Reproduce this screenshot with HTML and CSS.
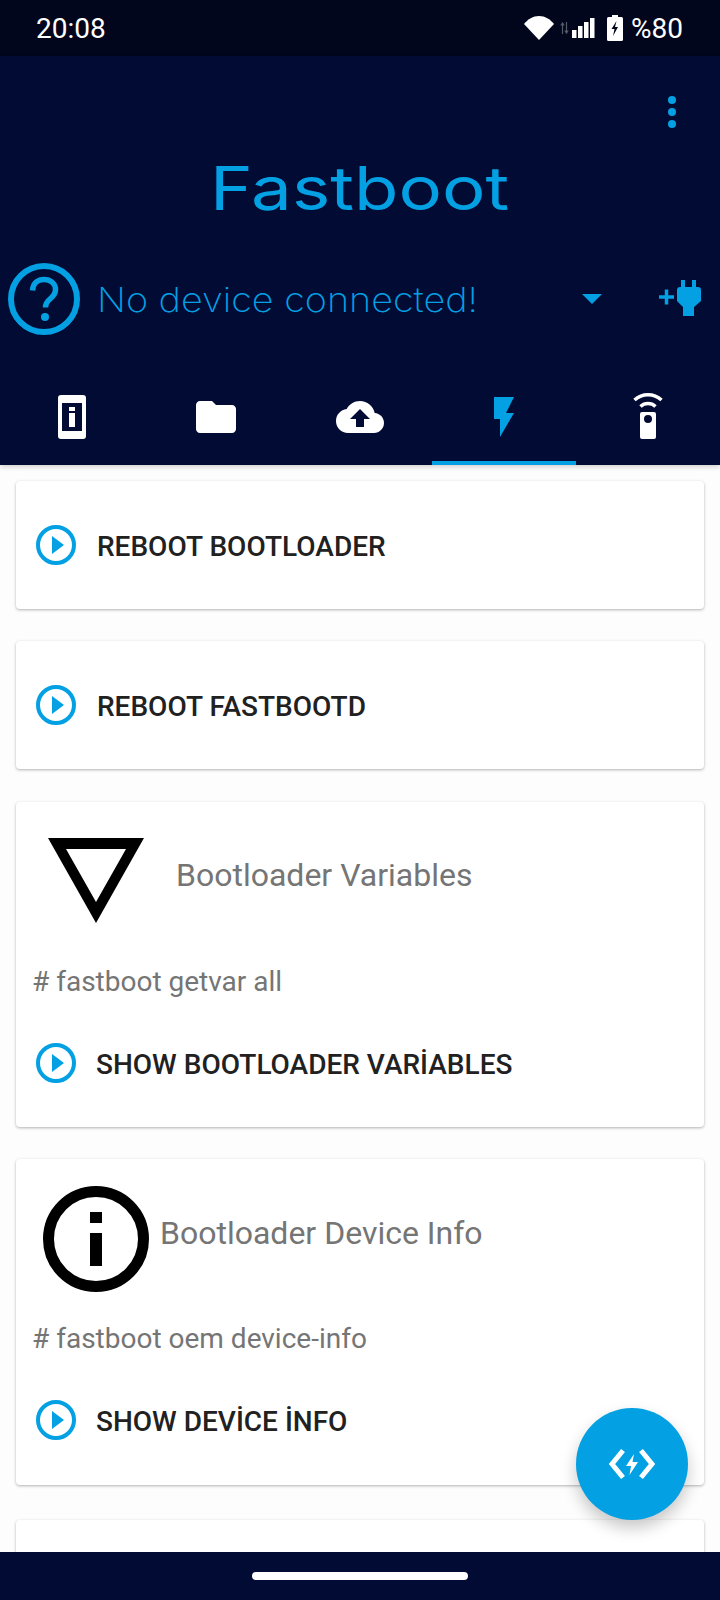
FILE: index.html
```html
<!DOCTYPE html>
<html lang="tr">
<head>
<meta charset="utf-8">
<title>Fastboot</title>
<link rel="stylesheet" href="styles.css">
</head>
<body>
<div class="screen">
  <div class="statusbar">
    <span class="clock">20:08</span>
    <div class="status-icons">
      <svg class="ic-wifi" width="30" height="24" viewBox="0 0 30 24"><path d="M0 8C4 3 9 0 15 0s11 3 15 8L15 24z" fill="#fff"/></svg>
      <svg class="ic-data" width="9" height="12" viewBox="0 0 9 12"><path d="M2.500 12V2M0.800 3.500 2.500 1l1.700 2.500M6.500 0v10M4.800 8.500 6.500 11l1.700-2.500" stroke="#555a68" stroke-width="1.200" fill="none"/></svg>
      <svg class="ic-signal" width="23" height="20" viewBox="0 0 23 20"><path d="M0 12h4.500v8H0zM6 8h4.500v12H6zM12 4h4.500v16H12zM18 0h4.500v20H18z" fill="#fff"/></svg>
      <svg class="ic-batt" width="16" height="26" viewBox="0 0 16 26"><path d="M5 0h6v2h3.500Q16 2 16 3.500V24.500Q16 26 14.500 26H1.500Q0 26 0 24.500V3.500Q0 2 1.500 2H5z" fill="#fff"/><path d="M9.500 6 4.500 14h3l-1.500 7 5-9H8z" fill="#02061c"/></svg>
      <span class="batt-text">%80</span>
    </div>
  </div>

  <header class="appbar">
    <div class="menu-row">
      <div class="dots"><i></i><i></i><i></i></div>
    </div>
    <h1 class="app-title"><span class="app-title-text">Fastboot</span></h1>
    <div class="device-row">
      <svg width="72" height="72" viewBox="0 0 72 72"><circle cx="36" cy="36" r="33" fill="none" stroke="#03a0e3" stroke-width="6"/><path d="M24.500 27.500C25 20 30 16.500 36 16.500c6.500 0 11.500 4 11.500 10 0 4.500-2.500 7-5.500 9.500-3 2.400-4.500 4-4.500 8.500" fill="none" stroke="#03a0e3" stroke-width="5.500"/><circle cx="37" cy="54" r="4" fill="#03a0e3"/></svg>
      <span class="device-name"><span class="device-name-text">No device connected!</span></span>
      <svg class="ic-caret" width="20" height="10" viewBox="0 0 20 10"><path d="M0 0h20L10 10z" fill="#03a0e3"/></svg>
      <svg class="ic-plug" width="44" height="38" viewBox="0 0 44 38"><path d="M0 18h15M7.500 10.500v15" stroke="#03a0e3" stroke-width="3.500"/><path d="M22 1h4v7h7V1h4v7h2q3 0 3 3v11l-7 6v9H24v-9l-6-6V11q0-3 3-3h1z" fill="#03a0e3"/></svg>
    </div>
    <nav class="tabs">
      <div class="tab">
        <svg width="48" height="48" viewBox="0 0 48 48"><path fill-rule="evenodd" d="M13 2h22q3 0 3 3v38q0 3-3 3H13q-3 0-3-3V5q0-3 3-3zM14 10v28h20V10zM21 14h6v4h-6zM21 20h6v14h-6z" fill="#fff"/></svg>
      </div>
      <div class="tab">
        <svg width="48" height="48" viewBox="0 0 24 24"><path d="M10 4H4c-1.100 0-1.990.9-1.990 2L2 18c0 1.100.9 2 2 2h16c1.100 0 2-.9 2-2V8c0-1.100-.9-2-2-2h-8l-2-2z" fill="#fff"/></svg>
      </div>
      <div class="tab">
        <svg width="48" height="48" viewBox="0 0 24 24"><path d="M19.350 10.040C18.670 6.590 15.640 4 12 4 9.110 4 6.600 5.640 5.350 8.040 2.340 8.360 0 10.910 0 14c0 3.310 2.690 6 6 6h13c2.760 0 5-2.240 5-5 0-2.640-2.050-4.780-4.650-4.960zM14 13v4h-4v-4H7l5-5 5 5h-3z" fill="#fff"/></svg>
      </div>
      <div class="tab tab-active">
        <svg width="48" height="48" viewBox="0 0 24 24"><path d="M7 2v11h3v9l7-12h-4l4-8z" fill="#03a0e3"/></svg>
      </div>
      <div class="tab">
        <svg width="48" height="48" viewBox="0 0 48 48"><path fill-rule="evenodd" d="M18 19h12q2 0 2 2v23q0 2-2 2H18q-2 0-2-2V21q0-2 2-2zM24 22a4 4 0 1 0 0 8 4 4 0 0 0 0-8z" fill="#fff"/><path d="M10.500 7A20 20 0 0 1 37.500 7M16.500 13.500A11 11 0 0 1 31.500 13.500" fill="none" stroke="#fff" stroke-width="3.500"/></svg>
      </div>
    </nav>
  </header>

  <main class="content">
    <section class="card card-simple">
      <div class="action">
        <svg class="play" width="40" height="40" viewBox="0 0 40 40"><circle cx="20" cy="20" r="18" fill="none" stroke="#03a0e3" stroke-width="4"/><path d="M16 11v18l12-9z" fill="#03a0e3"/></svg>
        <span class="action-label">REBOOT BOOTLOADER</span>
      </div>
    </section>
    <section class="card card-simple">
      <div class="action">
        <svg class="play" width="40" height="40" viewBox="0 0 40 40"><circle cx="20" cy="20" r="18" fill="none" stroke="#03a0e3" stroke-width="4"/><path d="M16 11v18l12-9z" fill="#03a0e3"/></svg>
        <span class="action-label">REBOOT FASTBOOTD</span>
      </div>
    </section>
    <section class="card card-full card-vars">
      <div class="card-head">
        <svg width="112" height="112" viewBox="0 0 112 112"><path fill-rule="evenodd" d="M8 12H104L56 97zM26 23 56 76 86 23z" fill="#000"/></svg>
        <span class="card-title title-wide">Bootloader Variables</span>
      </div>
      <p class="command">#&nbsp;fastboot getvar all</p>
      <div class="action action-tight">
        <svg class="play" width="40" height="40" viewBox="0 0 40 40"><circle cx="20" cy="20" r="18" fill="none" stroke="#03a0e3" stroke-width="4"/><path d="M16 11v18l12-9z" fill="#03a0e3"/></svg>
        <span class="action-label">SHOW BOOTLOADER VARİABLES</span>
      </div>
    </section>
    <section class="card card-full">
      <div class="card-head">
        <svg width="112" height="112" viewBox="0 0 112 112"><circle cx="56" cy="56" r="47.500" fill="none" stroke="#000" stroke-width="11"/><path d="M50 29h12v11H50zM50 50h12v33H50z" fill="#000"/></svg>
        <span class="card-title">Bootloader Device Info</span>
      </div>
      <p class="command">#&nbsp;fastboot oem device-info</p>
      <div class="action action-tight">
        <svg class="play" width="40" height="40" viewBox="0 0 40 40"><circle cx="20" cy="20" r="18" fill="none" stroke="#03a0e3" stroke-width="4"/><path d="M16 11v18l12-9z" fill="#03a0e3"/></svg>
        <span class="action-label">SHOW DEVİCE İNFO</span>
      </div>
    </section>
    <section class="card card-full card-last"></section>
  </main>

  <button class="fab" type="button" aria-label="Terminal">
    <svg width="48" height="32" viewBox="0 0 48 32"><path d="M15 2.500 4 16l11 13.500M33 2.500 44 16 33 29.500" fill="none" stroke="#fff" stroke-width="5"/><path d="M26 6 18 18h5l-1.500 9L30 14h-5.500z" fill="#fff"/></svg>
  </button>

  <footer class="navbar"><span class="home-pill"></span></footer>
</div>
</body>
</html>
```
FILE: styles.css
```css
* { box-sizing: border-box; }
html, body { margin: 0; padding: 0; background: #fdfdfd; }
.screen {
  position: relative;
  display: flex;
  flex-direction: column;
  width: 720px;
  height: 1600px;
  overflow: hidden;
  font-family: Roboto, "Liberation Sans", sans-serif;
}
.statusbar {
  flex: none;
  display: flex;
  align-items: center;
  height: 56px;
  padding: 0 37px 0 36px;
  background: #02061c;
  color: #fff;
  font-size: 28px;
  font-weight: 400;
}
.status-icons { display: flex; align-items: center; margin-left: auto; }
.ic-wifi { margin-right: 6px; }
.ic-data { margin-right: 3px; }
.ic-signal { margin-right: 12px; }
.ic-batt { margin-right: 8px; }
.appbar {
  flex: none;
  height: 409px;
  background: #020b33;
  box-shadow: 0 2px 5px rgba(0, 0, 0, .18);
  position: relative;
  z-index: 1;
}
.menu-row { display: flex; justify-content: flex-end; padding: 40px 44px 0 0; }
.dots { display: flex; flex-direction: column; gap: 4px; }
.dots i { display: block; width: 8px; height: 8px; border-radius: 50%; background: #03a0e3; }
.app-title {
  margin: 20px 0 0;
  height: 80px;
  text-align: center;
  font-family: "Inter", sans-serif;
  font-size: 60px;
  font-weight: 400;
  line-height: 80px;
  color: #03a0e3;
}
.app-title-text { display: inline-block; transform: scaleX(1.21); }
.device-row { display: flex; align-items: center; height: 72px; margin-top: 35px; padding-left: 8px; }
.device-name {
  flex: 1;
  margin-left: 17px;
  font-family: "Inter", sans-serif;
  font-size: 34px;
  font-weight: 200;
  color: #03a0e3;
}
.device-name-text { display: inline-block; transform: scaleX(1.11); transform-origin: left center; }
.ic-caret { margin-right: 57px; }
.ic-plug { margin-right: 17px; margin-top: -2px; }
.tabs { display: grid; grid-template-columns: repeat(5, 144px); margin-top: 50px; }
.tab { display: flex; justify-content: center; height: 80px; padding-top: 8px; }
.tab-active { border-bottom: 4px solid #03a0e3; }
.content { flex: 1; min-height: 0; overflow: hidden; padding: 16px 16px 0; }
.card {
  background: #fff;
  border-radius: 4px;
  box-shadow: 0 1px 3px rgba(0, 0, 0, .3);
  margin-bottom: 32px;
}
.card-simple { display: flex; align-items: center; height: 128px; }
.card-full { height: 326px; padding-top: 24px; }
.card-vars { height: 325px; margin-top: 33px; }
.card-last { margin-top: 35px; }
.action { display: flex; align-items: center; gap: 21px; padding-left: 20px; }
.action-tight { gap: 20px; height: 48px; margin-top: 37px; }
.play { flex: none; }
.action-label { margin-top: 4px; font-size: 28px; font-weight: 500; color: #212121; line-height: 36px; }
.card-head { display: flex; align-items: flex-start; padding-left: 24px; height: 112px; }
.card-title { margin: 28px 0 0 8px; font-size: 32px; line-height: 44px; color: #757575; }
.title-wide { margin: 27px 0 0 24px; }
.command { margin: 24px 0 0; padding-left: 16px; font-size: 28px; line-height: 40px; color: #757575; }
.fab {
  position: absolute;
  left: 576px;
  top: 1408px;
  display: flex;
  align-items: center;
  justify-content: center;
  width: 112px;
  height: 112px;
  padding: 0;
  border: 0;
  border-radius: 50%;
  background: #03a0e3;
  box-shadow: 0 8px 16px rgba(0, 0, 0, .22);
}
.navbar {
  flex: none;
  display: flex;
  align-items: center;
  justify-content: center;
  height: 48px;
  background: #020b33;
  position: relative;
  z-index: 1;
}
.home-pill { display: block; width: 216px; height: 8px; border-radius: 4px; background: #fff; }
```
